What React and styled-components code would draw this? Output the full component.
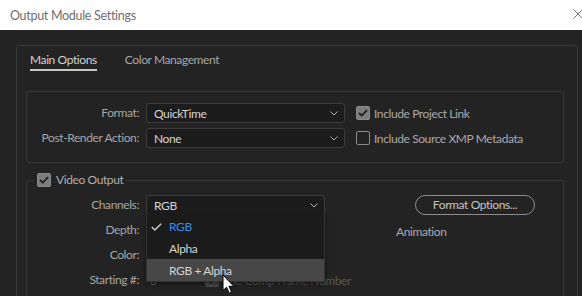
import React from "react";
import styled, { createGlobalStyle } from "styled-components";

const GlobalStyle = createGlobalStyle`
  html, body { margin: 0; padding: 0; background: #232323; }
  body { font-family: "Lato", "Noto Sans", sans-serif; font-size: 12px; letter-spacing: -0.4px; }
  * { box-sizing: border-box; }
`;

const Window = styled.div`
  position: relative;
  width: 582px;
  height: 296px;
  overflow: hidden;
  background: #232323;
`;

const TitleBar = styled.div`
  height: 30px;
  background: #ffffff;
  display: flex;
  align-items: center;
  justify-content: space-between;
  padding-left: 10px;
`;

const Title = styled.span`
  color: #6e6e6e;
  font-size: 12.5px;
  letter-spacing: -0.3px;
`;

const CloseIcon = styled.svg`
  width: 10px;
  height: 10px;
  margin-right: -1px;
  margin-top: -2px;
`;

const Body = styled.div`
  padding: 15px 4px 0 16px;
`;

const Panel = styled.div`
  border: 1px solid #3a3a3a;
  border-radius: 3px;
  padding: 0 13px 20px 9px;
  height: 300px;
`;

const Tabs = styled.div`
  display: flex;
  gap: 28px;
  padding: 6px 0 0 4px;
`;

const Tab = styled.div`
  line-height: 16px;
  padding-bottom: 1px;
  color: ${(p) => (p.$active ? "#d2d2d2" : "#a8a8a8")};
  border-bottom: 2px solid ${(p) => (p.$active ? "#c8c8c8" : "transparent")};
`;

const Group = styled.div`
  margin-top: 20px;
  border: 1px solid #383838;
  border-radius: 3px;
  padding: 11px 0 14px 0;
`;

const FormGrid = styled.div`
  display: grid;
  grid-template-columns: 112px ${(p) => p.$sel}px ${(p) => p.$third || "auto"};
  column-gap: 7px;
  row-gap: 5px;
  align-items: center;
`;

const Label = styled.div`
  text-align: right;
  color: #a6a6a6;
  white-space: nowrap;
  line-height: 20px;
`;

const SelectBox = styled.div`
  position: relative;
  height: 20px;
  border: 1px solid #3c3c3c;
  border-radius: 3px;
  background: #1c1c1c;
  color: #d6d6d6;
  display: flex;
  align-items: center;
  justify-content: space-between;
  padding: 0 6px 0 7px;
  white-space: nowrap;
`;

const Chevron = styled.svg`
  width: 8px;
  height: 5px;
  flex: none;
`;

const CheckRow = styled.label`
  display: flex;
  align-items: center;
  gap: 4px;
  color: ${(p) => (p.$dim ? "#585858" : "#a9a9ae")};
  white-space: nowrap;
  margin-left: ${(p) => p.$ml || 0}px;
`;

const Box = styled.span`
  width: 14px;
  height: 14px;
  border-radius: 2px;
  flex: none;
  display: inline-flex;
  align-items: center;
  justify-content: center;
  background: ${(p) => (p.$checked ? (p.$dim ? "#4a4a4a" : "#7c7c7c") : "transparent")};
  border: 1px solid ${(p) => (p.$checked ? (p.$dim ? "#4a4a4a" : "#8a8a8a") : "#8c8c8c")};
`;

const Fieldset = styled.fieldset`
  margin: 9px 0 0 0;
  border: 1px solid #383838;
  border-radius: 3px;
  padding: 7px 0 20px 0;
  min-width: 0;
`;

const Legend = styled.legend`
  margin-left: 7px;
  padding: 0 3px;
  display: flex;
  align-items: center;
  gap: 5px;
  color: #b0b0b0;
  line-height: 16px;
`;

const SelectWrap = styled.div`
  position: relative;
`;

const Menu = styled.div`
  position: absolute;
  left: 0;
  top: 19px;
  width: 179px;
  background: #1b1b1b;
  border: 1px solid #343434;
  border-top: none;
  box-shadow: 0 2px 4px rgba(0, 0, 0, 0.5);
  z-index: 5;
  padding-top: 1px;
`;

const MenuItem = styled.div`
  height: 22px;
  display: flex;
  align-items: center;
  padding-left: 22px;
  position: relative;
  color: ${(p) => (p.$selected ? "#2f8ff0" : "#d4d4d4")};
  background: ${(p) => (p.$hover ? "#474747" : "transparent")};
`;

const MenuCheck = styled.svg`
  position: absolute;
  left: 4px;
  top: 8px;
  width: 11px;
  height: 8px;
`;

const RightCol = styled.div`
  padding-left: ${(p) => p.$pl}px;
`;

const PillButton = styled.button`
  width: 120px;
  height: 20px;
  border: 1px solid #8e8e8e;
  border-radius: 10px;
  background: transparent;
  color: #c4c4c4;
  font: inherit;
  letter-spacing: inherit;
  padding: 0;
  line-height: 18px;
`;

const InfoText = styled.div`
  color: #a8a8b0;
  padding-top: 3px;
`;

const StartRow = styled.div`
  display: flex;
  align-items: center;
  white-space: nowrap;
`;

const NumValue = styled.span`
  flex: none;
  color: #6a6a6a;
  width: 59px;
  padding-left: 4px;
`;

const Cursor = styled.svg`
  position: absolute;
  left: 222px;
  top: 274px;
  width: 13px;
  height: 21px;
  z-index: 10;
`;

const Check = ({ dim }) => (
  <svg width="10" height="8" viewBox="0 0 10 8">
    <path d="M1 4 L3.8 6.6 L9 1.2" fill="none" stroke={dim ? "#2a2a2a" : "#1e1e1e"} strokeWidth="1.8" />
  </svg>
);

const Checkbox = ({ checked, dim }) => (
  <Box $checked={checked} $dim={dim}>
    {checked && <Check dim={dim} />}
  </Box>
);

const Select = ({ value }) => (
  <SelectBox>
    <span>{value}</span>
    <Chevron viewBox="0 0 8 5">
      <path d="M0.5 0.5 L4 4 L7.5 0.5" fill="none" stroke="#b5b5b5" strokeWidth="1" />
    </Chevron>
  </SelectBox>
);

export default function App() {
  return (
    <>
      <GlobalStyle />
      <Window>
        <TitleBar>
          <Title>Output Module Settings</Title>
          <CloseIcon viewBox="0 0 10 10">
            <path d="M0.5 0.5 L9.5 9.5 M9.5 0.5 L0.5 9.5" stroke="#777" strokeWidth="1" />
          </CloseIcon>
        </TitleBar>
        <Body>
          <Panel>
            <Tabs>
              <Tab $active>Main Options</Tab>
              <Tab>Color Management</Tab>
            </Tabs>
            <Group>
              <FormGrid $sel={199} $third="auto">
                <Label>Format:</Label>
                <Select value="QuickTime" />
                <CheckRow $ml={4}>
                  <Checkbox checked />
                  Include Project Link
                </CheckRow>
                <Label>Post-Render Action:</Label>
                <Select value="None" />
                <CheckRow $ml={4}>
                  <Checkbox />
                  Include Source XMP Metadata
                </CheckRow>
              </FormGrid>
            </Group>
            <Fieldset>
              <Legend>
                <Checkbox checked />
                Video Output
              </Legend>
              <FormGrid $sel={179} $third="1fr">
                <Label>Channels:</Label>
                <SelectWrap>
                  <Select value="RGB" />
                  <Menu>
                    <MenuItem $selected>
                      <MenuCheck viewBox="0 0 11 8">
                        <path d="M0.8 4 L3.8 7 L10.2 0.8" fill="none" stroke="#c8c8c8" strokeWidth="1.5" />
                      </MenuCheck>
                      RGB
                    </MenuItem>
                    <MenuItem>Alpha</MenuItem>
                    <MenuItem $hover>RGB + Alpha</MenuItem>
                  </Menu>
                </SelectWrap>
                <RightCol $pl={83}>
                  <PillButton>Format Options...</PillButton>
                </RightCol>
                <Label>Depth:</Label>
                <Select value="" />
                <RightCol $pl={64}>
                  <InfoText>Animation</InfoText>
                </RightCol>
                <Label>Color:</Label>
                <Select value="" />
                <div />
                <Label>Starting #:</Label>
                <StartRow>
                  <NumValue>0</NumValue>
                  <CheckRow $dim>
                    <Checkbox checked dim />
                    Use Comp Frame Number
                  </CheckRow>
                </StartRow>
                <div />
              </FormGrid>
            </Fieldset>
          </Panel>
        </Body>
        <Cursor viewBox="0 0 13 21">
          <path
            d="M1 1 L1 16.5 L4.6 13.2 L7.2 19.2 L9.6 18.2 L7 12.3 L11.8 12.3 Z"
            fill="#ffffff"
            stroke="#000000"
            strokeWidth="1"
            strokeLinejoin="round"
          />
        </Cursor>
      </Window>
    </>
  );
}
